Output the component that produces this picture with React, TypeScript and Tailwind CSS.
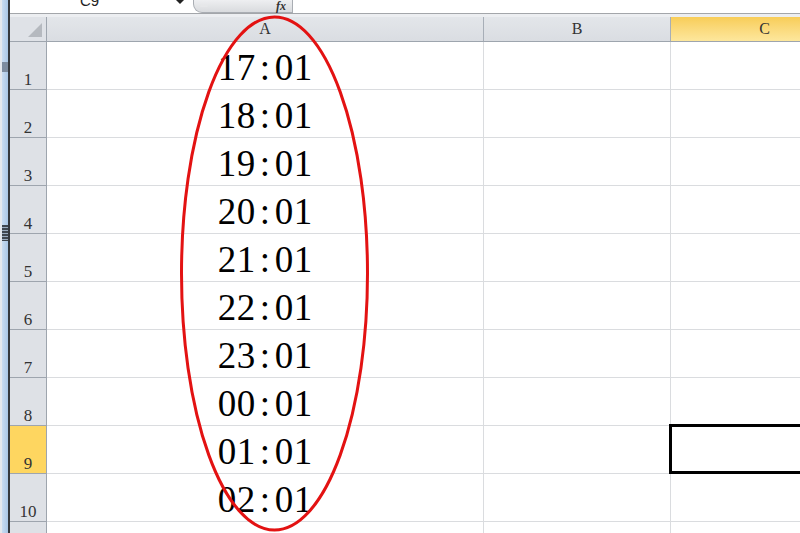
import React from "react";

const times = ["17:01", "18:01", "19:01", "20:01", "21:01", "22:01", "23:01", "00:01", "01:01", "02:01", ""];

function TimeText({ t }: { t: string }) {
  return (
    <div className="flex leading-none text-[37px] text-black" style={{ fontFamily: '"Liberation Serif", serif' }}>
      {t.split("").map((c, i) => (
        <span key={i} className="inline-block w-[19px] text-center">
          {c}
        </span>
      ))}
    </div>
  );
}

export default function App() {
  return (
    <div className="relative w-[800px] h-[533px] overflow-hidden bg-white flex" style={{ fontFamily: '"Liberation Serif", serif' }}>
      {/* left window edge */}
      <div className="flex w-[10px] h-full shrink-0">
        <div className="w-[2px] h-full bg-[#e4e8ee]" />
        <div className="w-[6px] h-full bg-gradient-to-r from-[#c9dcf1] to-[#a9c6e6] flex flex-col">
          <div className="h-[62px] shrink-0" />
          <div className="h-[10px] shrink-0 bg-[#7d8ca0]" />
          <div className="h-[153px] shrink-0" />
          <div className="h-[16px] shrink-0 bg-[repeating-linear-gradient(180deg,#3e4650_0px,#3e4650_2px,#9aabbf_2px,#9aabbf_3px)]" />
        </div>
        <div className="w-[2px] h-full bg-[#34383e]" />
      </div>

      {/* main */}
      <div className="flex flex-col w-[790px] shrink-0">
        {/* formula bar */}
        <div className="h-[13px] shrink-0 flex bg-white overflow-hidden">
          <div className="w-[183px] shrink-0 flex">
            <div className="w-[70px]" />
            <div className="-mt-[7px] text-[15px] leading-none text-[#222]" style={{ fontFamily: '"Liberation Sans", sans-serif' }}>C9</div>
            <div className="flex-1" />
            <div className="w-0 h-0 mr-[9px] border-l-[4px] border-r-[4px] border-t-[4px] border-l-transparent border-r-transparent border-t-[#222]" />
          </div>
          <div className="w-[100px] shrink-0 h-[13px] rounded-bl-[9px] border-b border-l border-r border-[#a9adb3] bg-gradient-to-b from-[#eeeff1] to-[#d9dbde] flex items-center">
            <div className="ml-[6px] w-[8px] h-[2px] bg-[#e6e7e9] rounded-sm" />
            <div className="flex-1" />
            <span className="mr-[6px] text-[12px] italic font-bold leading-none text-[#333]" style={{ fontFamily: '"Liberation Serif", serif' }}>fx</span>
          </div>
          <div className="flex-1" />
        </div>
        <div className="h-[1px] shrink-0 bg-[#a3a6aa]" />
        <div className="h-[3px] shrink-0 bg-[#eceef1]" />

        {/* column headers */}
        <div className="h-[25px] shrink-0 flex border-b border-[#9ea5ae] text-[16px] text-[#333] leading-none">
          <div className="w-[37px] shrink-0 border-r border-[#9ea5ae] bg-[#dfe2e7] flex items-end justify-end pr-[4px] pb-[4px]">
            <div className="w-0 h-0" style={{ borderBottom: "14px solid #b5b9bf", borderLeft: "14px solid transparent" }} />
          </div>
          <div className="w-[437px] shrink-0 border-r border-[#a7aeb7] bg-gradient-to-b from-[#e3e6ea] to-[#dadde2] flex items-end justify-center pb-[4px]">A</div>
          <div className="w-[187px] shrink-0 border-r border-[#a7aeb7] bg-gradient-to-b from-[#e3e6ea] to-[#dadde2] flex items-end justify-center pb-[4px]">B</div>
          <div className="w-[187px] shrink-0 bg-gradient-to-b from-[#f8cd57] to-[#fde79c] flex items-end justify-center pb-[4px]">C</div>
        </div>

        {/* rows */}
        {times.map((t, i) => {
          const n = i + 1;
          const sel = n === 9;
          return (
            <div key={i} className="h-[48px] shrink-0 flex">
              <div
                className={`w-[37px] shrink-0 border-r border-b border-[#9ea5ae] flex items-end justify-center pb-[1px] text-[17px] leading-none text-[#333] ${sel ? "bg-[#fed660]" : "bg-[#dee1e6]"}`}
              >
                {n <= 10 ? n : ""}
              </div>
              <div className="w-[437px] shrink-0 border-r border-b border-[#dadcdf] flex items-end justify-center pb-[3px]">
                <TimeText t={t} />
              </div>
              <div className="w-[187px] shrink-0 border-r border-b border-[#dadcdf]" />
              <div className="w-[187px] shrink-0 border-b border-r border-[#dadcdf] relative">
                {sel && <div className="absolute left-[-2px] top-[-2px] w-[190px] h-[50px] border-[3px] border-black" />}
              </div>
            </div>
          );
        })}
      </div>

      {/* red ellipse annotation */}
      <svg className="absolute left-0 top-0 pointer-events-none" width="800" height="533" viewBox="0 0 800 533">
        <ellipse cx="274.5" cy="273.5" rx="93" ry="256.5" fill="none" stroke="#e31212" strokeWidth="3" />
      </svg>
    </div>
  );
}
